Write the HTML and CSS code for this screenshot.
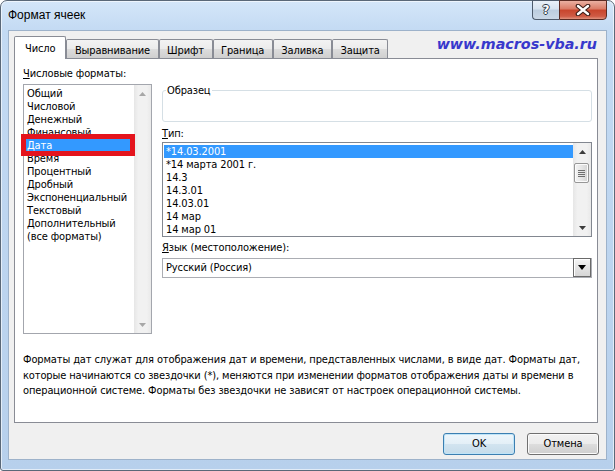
FILE: index.html
```html
<!DOCTYPE html>
<html lang="ru">
<head>
<meta charset="utf-8">
<title>Формат ячеек</title>
<link rel="stylesheet" href="styles.css">
</head>
<body>
<div class="window">
  <div class="titlebar">
    <div class="title">Формат ячеек</div>
    <div class="caption-buttons">
      <div class="cap-btn help"><span>?</span></div>
      <div class="cap-btn close">
        <svg width="16" height="12" viewBox="0 0 16 12"><path d="M3 2 L13 10 M13 2 L3 10" stroke="#3b1d18" stroke-width="4.6" stroke-linecap="round"/><path d="M3 2 L13 10 M13 2 L3 10" stroke="#ffffff" stroke-width="2.4" stroke-linecap="round"/></svg>
      </div>
    </div>
  </div>
  <div class="client">
    <div class="tabstrip">
      <div class="tab active">Число</div>
      <div class="tab">Выравнивание</div>
      <div class="tab">Шрифт</div>
      <div class="tab">Граница</div>
      <div class="tab">Заливка</div>
      <div class="tab">Защита</div>
      <div class="watermark">www.macros-vba.ru</div>
    </div>
    <div class="panel">
      <div class="cols">
        <div class="col-left">
          <div class="label"><u>Ч</u>исловые форматы:</div>
          <div class="listbox cat-list">
            <div class="items">
              <div class="item">Общий</div>
              <div class="item">Числовой</div>
              <div class="item">Денежный</div>
              <div class="item">Финансовый</div>
              <div class="item sel">Дата</div>
              <div class="item">Время</div>
              <div class="item">Процентный</div>
              <div class="item">Дробный</div>
              <div class="item">Экспоненциальный</div>
              <div class="item">Текстовый</div>
              <div class="item">Дополнительный</div>
              <div class="item">(все форматы)</div>
            </div>
            <div class="vscroll disabled">
              <div class="arrow"><svg width="7" height="4" viewBox="0 0 7 4"><path d="M0 4 L3.5 0 L7 4 Z" fill="#a7a7a7"/></svg></div>
              <div class="track"></div>
              <div class="arrow"><svg width="7" height="4" viewBox="0 0 7 4"><path d="M0 0 L7 0 L3.5 4 Z" fill="#a7a7a7"/></svg></div>
            </div>
            <div class="annot"></div>
          </div>
        </div>
        <div class="col-right">
          <fieldset class="sample"><legend>Образец</legend></fieldset>
          <div class="label lbl-type"><u>Т</u>ип:</div>
          <div class="listbox type-list">
            <div class="items">
              <div class="item sel">*14.03.2001</div>
              <div class="item">*14 марта 2001 г.</div>
              <div class="item">14.3</div>
              <div class="item">14.3.01</div>
              <div class="item">14.03.01</div>
              <div class="item">14 мар</div>
              <div class="item">14 мар 01</div>
            </div>
            <div class="vscroll">
              <div class="arrow"><svg width="7" height="4" viewBox="0 0 7 4"><path d="M0 4 L3.5 0 L7 4 Z" fill="#3c3c3c"/></svg></div>
              <div class="track">
                <div class="thumb"><span></span><span></span><span></span><span></span></div>
              </div>
              <div class="arrow"><svg width="7" height="4" viewBox="0 0 7 4"><path d="M0 0 L7 0 L3.5 4 Z" fill="#3c3c3c"/></svg></div>
            </div>
          </div>
          <div class="label lbl-lang"><u>Я</u>зык (местоположение):</div>
          <div class="combo">
            <div class="combo-text">Русский (Россия)</div>
            <div class="combo-btn"><svg width="8" height="5" viewBox="0 0 8 5"><path d="M0 0 L8 0 L4 5 Z" fill="#000"/></svg></div>
          </div>
        </div>
      </div>
      <p class="desc">Форматы дат служат для отображения дат и времени, представленных числами, в виде дат. Форматы дат,<br>которые начинаются со звездочки (*), меняются при изменении форматов отображения даты и времени в<br>операционной системе. Форматы без звездочки не зависят от настроек операционной системы.</p>
    </div>
    <div class="buttons">
      <div class="btn default">OK</div>
      <div class="btn">Отмена</div>
    </div>
  </div>
</div>
</body>
</html>
```

FILE: styles.css
```css
* { box-sizing: border-box; }
html, body { margin: 0; padding: 0; }
body {
  width: 615px;
  height: 471px;
  overflow: hidden;
  background: #ffffff;
  font-family: "DejaVu Sans Condensed", "Liberation Sans", Arial, sans-serif;
  font-size: 11px;
  letter-spacing: -0.12px;
  color: #000;
}

.window {
  width: 615px;
  height: 471px;
  border: 1px solid #5a6878;
  border-radius: 7px 7px 3px 3px;
  background: linear-gradient(180deg, #d4e6f9 0px, #c3daf3 30px, #b7d0ec 100%);
  box-shadow: inset 0 0 0 1px rgba(255, 255, 255, 0.6);
  padding: 0 7px 10px 7px;
  display: flex;
  flex-direction: column;
}

.titlebar {
  height: 29px;
  display: flex;
  align-items: flex-start;
}
.title {
  font-family: "Liberation Sans", Arial, sans-serif;
  font-size: 12px;
  letter-spacing: 0;
  line-height: 16px;
  padding-top: 6px;
  color: #000;
}
.caption-buttons {
  margin-left: auto;
  margin-top: -1px;
  display: flex;
}
.cap-btn {
  height: 20px;
  border: 1px solid #4e5b6c;
  display: flex;
  align-items: center;
  justify-content: center;
}
.help {
  width: 27px;
  border-right: none;
  border-radius: 0 0 0 4px;
  background: linear-gradient(180deg, #e9f0f8 0%, #d6e2ef 45%, #bccddf 50%, #cad8e7 100%);
}
.help span {
  font-family: "DejaVu Sans", sans-serif;
  font-weight: bold;
  font-size: 12px;
  line-height: 14px;
  color: #fff;
  text-shadow: 1px 0 0 #2d3745, -1px 0 0 #2d3745, 0 1px 0 #2d3745, 0 -1px 0 #2d3745;
}
.close {
  width: 48px;
  border-color: #5b2b23;
  border-radius: 0 0 4px 0;
  background: linear-gradient(180deg, #eab0a2 0%, #da7a65 45%, #c8452c 50%, #cf5b45 85%, #e1947f 100%);
}
.close svg { display: block; }

.client {
  flex: 1;
  background: #f0f0f0;
  border: 1px solid #9db2ca;
  display: flex;
  flex-direction: column;
}

.tabstrip {
  display: flex;
  align-items: flex-end;
  height: 22px;
  margin: 5px 8px 0 5px;
}
.tab {
  height: 19px;
  padding: 2px 7.5px 0 7.5px;
  line-height: 17px;
  border: 1px solid #898c95;
  border-bottom: none;
  border-radius: 2px 2px 0 0;
  background: linear-gradient(180deg, #f3f3f3 0%, #ebebeb 50%, #dddddd 50%, #cfcfcf 100%);
  white-space: nowrap;
}
.tab.active {
  height: 23px;
  margin-bottom: -1px;
  padding: 2px 10px 0 10px;
  line-height: 20px;
  background: #ffffff;
  position: relative;
  z-index: 1;
}
.watermark {
  margin-left: auto;
  margin-right: 1px;
  align-self: flex-start;
  font-family: "DejaVu Sans", Verdana, sans-serif;
  font-weight: bold;
  font-style: italic;
  font-size: 14.3px;
  letter-spacing: 0;
  line-height: 16px;
  color: #3838cc;
  white-space: nowrap;
}

.panel {
  height: 365px;
  margin: 0 8px 0 5px;
  background: #ffffff;
  border: 1px solid #898c95;
  padding: 8px 0 0 8px;
}
.cols {
  display: flex;
  gap: 10px;
  align-items: flex-start;
}
.col-left { width: 129px; }
.col-right {
  width: 430px;
  margin-top: 17px;
}
.label {
  line-height: 13px;
  white-space: nowrap;
}

.listbox {
  position: relative;
  border: 1px solid #828790;
  background: #fff;
  display: flex;
}
.cat-list {
  margin-top: 4px;
  height: 250px;
  border-color: #a3a6ad;
}
.items {
  flex: 1;
  min-width: 0;
  padding-top: 2px;
}
.item {
  height: 13px;
  line-height: 13px;
  white-space: nowrap;
}
.cat-list .item {
  margin: 0 4px 0 2px;
  padding-left: 1px;
}
.type-list .item {
  margin-left: 1px;
  padding-left: 2px;
}
.item.sel {
  background: #3399ff;
  color: #ffffff;
}

.vscroll {
  display: flex;
  flex-direction: column;
  background: linear-gradient(90deg, #e6e6e6 0%, #f1f1f1 25%, #f1f1f1 75%, #e9e9e9 100%);
}
.cat-list .vscroll { width: 17px; }
.type-list .vscroll { width: 18px; }
.arrow {
  height: 17px;
  display: flex;
  align-items: center;
  justify-content: center;
}
.arrow svg { display: block; }
.track { flex: 1; }
.thumb {
  margin: 3px 2px 0 1px;
  height: 20px;
  border: 1px solid #979797;
  border-radius: 2px;
  background: linear-gradient(90deg, #f4f4f4 0%, #e6e6e6 50%, #d4d4d4 100%);
  box-shadow: inset 0 0 0 1px #fbfbfb;
  display: flex;
  flex-direction: column;
  align-items: center;
  justify-content: center;
  gap: 1px;
}
.thumb span {
  display: block;
  width: 7px;
  height: 1px;
  background: #6f6f6f;
}

.annot {
  position: absolute;
  left: -3px;
  top: 49px;
  width: 114px;
  height: 22px;
  border: 5px solid #e4141d;
}

.sample {
  margin: 0;
  padding: 0;
  min-width: 0;
  height: 38px;
  border: 1px solid #d5dfe5;
  border-radius: 3px;
}
.sample legend {
  margin-left: 3px;
  padding: 0 1px;
  line-height: 13px;
}
.lbl-type { margin-top: 5px; }
.type-list {
  margin-top: 2px;
  height: 95px;
}
.lbl-lang { margin-top: 4px; }
.combo {
  margin-top: 4px;
  height: 20px;
  border: 1px solid #abadb3;
  display: flex;
  background: #fff;
}
.combo-text {
  flex: 1;
  padding-left: 3px;
  line-height: 18px;
}
.combo-btn {
  width: 18px;
  height: 19px;
  margin-top: -1px;
  border: 1px solid #6a6a6a;
  background: linear-gradient(180deg, #f4f4f4 0%, #e4e4e4 50%, #d6d6d6 100%);
  box-shadow: inset 1px 1px 0 #ffffff;
  display: flex;
  align-items: center;
  justify-content: center;
}
.combo-btn svg { display: block; }

.desc {
  margin: 18px 0 0 0;
  line-height: 15.5px;
  white-space: nowrap;
}

.buttons {
  display: flex;
  justify-content: flex-end;
  gap: 12px;
  padding: 10px 7px 0 0;
}
.btn {
  width: 72px;
  height: 22px;
  border: 1px solid #707070;
  border-radius: 3px;
  background: linear-gradient(180deg, #f2f2f2 0%, #ebebeb 50%, #dddddd 50%, #cfcfcf 100%);
  box-shadow: inset 0 0 0 1px #fbfbfb;
  text-align: center;
  line-height: 20px;
}
.btn.default {
  border-color: #3c7fb1;
  box-shadow: inset 0 0 0 1px #bfe4f8;
  background: linear-gradient(180deg, #eef6fb 0%, #e3eff7 50%, #d2e4f0 50%, #c6dcea 100%);
}
```
